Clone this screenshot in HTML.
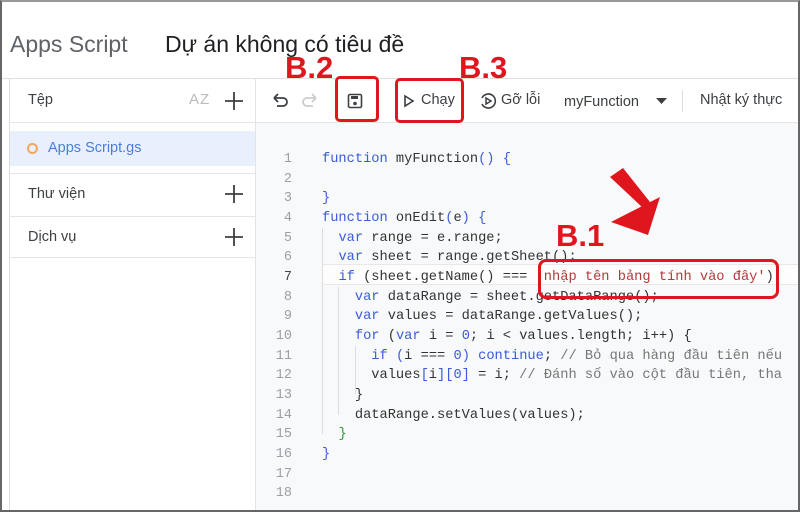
<!DOCTYPE html>
<html><head><meta charset="utf-8"><style>
*{margin:0;padding:0;box-sizing:border-box}
body{width:800px;height:512px;overflow:hidden;background:#fff;font-family:"Liberation Sans",sans-serif;position:relative}
.frame{position:absolute;left:0;top:0;width:800px;height:512px;border:2px solid #666;border-top-color:#999}
.abs{position:absolute;white-space:nowrap}
.code{font-family:"Liberation Mono",monospace;font-size:13.7px;color:#333}
.ln{font-family:"Liberation Mono",monospace;font-size:13.5px;color:#9aa0a6;text-align:right;width:30px}
.k{color:#3b5bdb}.s{color:#b33a3a}.c{color:#777}.n{color:#3b5bdb}
.red{color:#e0161e;font-weight:bold;font-size:31px;font-family:"Liberation Sans",sans-serif}
.box{position:absolute;border:3px solid #e0161e;border-radius:5px}
.plus{position:absolute}
</style></head><body>
<div class="abs" style="left:10px;top:31px;font-size:23px;color:#5f6368">Apps Script</div>
<div class="abs" style="left:165px;top:31px;font-size:23px;color:#202124">Dự án không có tiêu đề</div>
<div class="abs" style="left:0;top:78px;width:800px;height:1px;background:#e0e0e0"></div>
<div class="abs" style="left:9px;top:78px;width:1px;height:434px;background:#ddd"></div>
<div class="abs" style="left:255px;top:78px;width:1px;height:434px;background:#e4e4e4"></div>
<div class="abs" style="left:256px;top:122px;width:544px;height:390px;background:#f8f9fa"></div>
<div class="abs" style="left:9px;top:122px;width:791px;height:1px;background:#e6e6e6"></div>
<div class="abs" style="left:28px;top:92px;font-size:14.5px;color:#3c4043">Tệp</div>
<div class="abs" style="left:189px;top:91px;font-size:15px;color:#bbb;letter-spacing:1px">AZ</div>
<svg class="plus" style="left:224px;top:91px" width="20" height="20"><path d="M10 1v18M1 10h18" stroke="#3c4043" stroke-width="1.8"/></svg>
<div class="abs" style="left:10px;top:131px;width:245px;height:35px;background:#e8f0fe"></div>
<div class="abs" style="left:27px;top:143px;width:11px;height:11px;border:2px solid #f0a860;border-radius:50%"></div>
<div class="abs" style="left:48px;top:140px;font-size:14.5px;color:#4a7fd6">Apps Script.gs</div>
<div class="abs" style="left:10px;top:173px;width:245px;height:1px;background:#e6e6e6"></div>
<div class="abs" style="left:28px;top:186px;font-size:14.5px;color:#3c4043">Thư viện</div>
<svg class="plus" style="left:224px;top:184px" width="20" height="20"><path d="M10 1v18M1 10h18" stroke="#3c4043" stroke-width="1.8"/></svg>
<div class="abs" style="left:10px;top:216px;width:245px;height:1px;background:#e6e6e6"></div>
<div class="abs" style="left:28px;top:229px;font-size:14.5px;color:#3c4043">Dịch vụ</div>
<svg class="plus" style="left:224px;top:227px" width="20" height="20"><path d="M10 1v18M1 10h18" stroke="#3c4043" stroke-width="1.8"/></svg>
<div class="abs" style="left:10px;top:257px;width:245px;height:1px;background:#e6e6e6"></div>
<!-- toolbar -->
<svg class="abs" style="left:270px;top:92px" width="50" height="18" viewBox="0 0 50 18"><path d="M4 6h9a4 4 0 0 1 0 8H7M4 6l4-4M4 6l4 4" fill="none" stroke="#3c4043" stroke-width="1.8"/><path d="M46 6h-9a4 4 0 0 0 0 8h6M46 6l-4-4M46 6l-4 4" fill="none" stroke="#ccc" stroke-width="1.8"/></svg>
<svg class="abs" style="left:347px;top:93px" width="16" height="16" viewBox="0 0 16 16"><rect x="1.5" y="1.5" width="13" height="13" rx="1.5" fill="none" stroke="#3c4043" stroke-width="1.6"/><rect x="4" y="3" width="7" height="3" fill="#3c4043"/><circle cx="8" cy="10.5" r="1.8" fill="#3c4043"/></svg>
<svg class="abs" style="left:403px;top:94px" width="12" height="14"><path d="M2 2l8 5-8 5z" fill="none" stroke="#3c4043" stroke-width="1.6"/></svg>
<div class="abs" style="left:421px;top:92px;font-size:14.5px;color:#3c4043">Chạy</div>
<svg class="abs" style="left:479px;top:92px" width="18" height="18" viewBox="0 0 18 18"><path d="M3 6a7 7 0 1 1 0 6" fill="none" stroke="#3c4043" stroke-width="1.6"/><path d="M7 6l5 3-5 3z" fill="none" stroke="#3c4043" stroke-width="1.5"/></svg>
<div class="abs" style="left:501px;top:92px;font-size:14.5px;color:#3c4043">Gỡ lỗi</div>
<div class="abs" style="left:564px;top:94px;font-size:14.5px;color:#3c4043">myFunction</div>
<svg class="abs" style="left:656px;top:98px" width="12" height="8"><path d="M0 0h11l-5.5 6z" fill="#3c4043"/></svg>
<div class="abs" style="left:682px;top:90px;width:1px;height:22px;background:#ddd"></div>
<div class="abs" style="left:700px;top:92px;font-size:14.5px;color:#3c4043">Nhật ký thực</div>
<!-- code -->
<div class="abs" style="left:322px;top:264px;width:478px;height:21px;border-top:1px solid #e8e8e8;border-bottom:1px solid #e8e8e8;background:#fdfdfd"></div>
<div class="abs" style="left:322px;top:228px;width:1px;height:206px;background:#ddd"></div>
<div class="abs" style="left:338px;top:287px;width:1px;height:128px;background:#ddd"></div>
<div class="abs" style="left:355px;top:346px;width:1px;height:48px;background:#ddd"></div>
<div class="abs ln" style="left:262px;top:150px;line-height:19.65px">1<br>2<br>3<br>4<br>5<br>6<br><span style="color:#444">7</span><br>8<br>9<br>10<br>11<br>12<br>13<br>14<br>15<br>16<br>17<br>18</div>
<div class="abs code" style="left:322px;top:150px;line-height:19.65px;white-space:pre"><span class="k">function</span> myFunction<span class="n">()</span> <span class="n">{</span>

<span class="n">}</span>
<span class="k">function</span> onEdit<span class="n">(</span>e<span class="n">)</span> <span class="n">{</span>
  <span class="k">var</span> range = e.range;
  <span class="k">var</span> sheet = range.getSheet();
  <span class="k">if</span> (sheet.getName() === <span class="s">'nhập tên bảng tính vào đây'</span>)
    <span class="k">var</span> dataRange = sheet.getDataRange();
    <span class="k">var</span> values = dataRange.getValues();
    <span class="k">for</span> (<span class="k">var</span> i = <span class="n">0</span>; i &lt; values.length; i++) {
      <span class="k">if</span> <span class="n">(</span>i === <span class="n">0</span><span class="n">)</span> <span class="k">continue</span>; <span class="c">// Bỏ qua hàng đầu tiên nếu</span>
      values<span class="n">[</span>i<span class="n">][0]</span> = i; <span class="c">// Đánh số vào cột đầu tiên, tha</span>
    }
    dataRange.setValues(values);
  <span style="color:#2a9d3a">}</span>
<span class="n">}</span></div>
<!-- annotations -->
<div class="abs red" style="left:285px;top:50px">B.2</div>
<div class="abs red" style="left:459px;top:50px">B.3</div>
<div class="abs red" style="left:556px;top:218px">B.1</div>
<div class="box" style="left:335px;top:76px;width:44px;height:46px"></div>
<div class="box" style="left:395px;top:78px;width:69px;height:45px"></div>
<div class="box" style="left:538px;top:259px;width:241px;height:40px;border-radius:8px"></div>
<svg class="abs" style="left:600px;top:160px" width="70" height="85"><path d="M10 17L23 8 50 42 43 48z" fill="#e0161e"/><path d="M11 62L60 37 48 75z" fill="#e0161e"/></svg>
<div class="frame"></div>
</body></html>
